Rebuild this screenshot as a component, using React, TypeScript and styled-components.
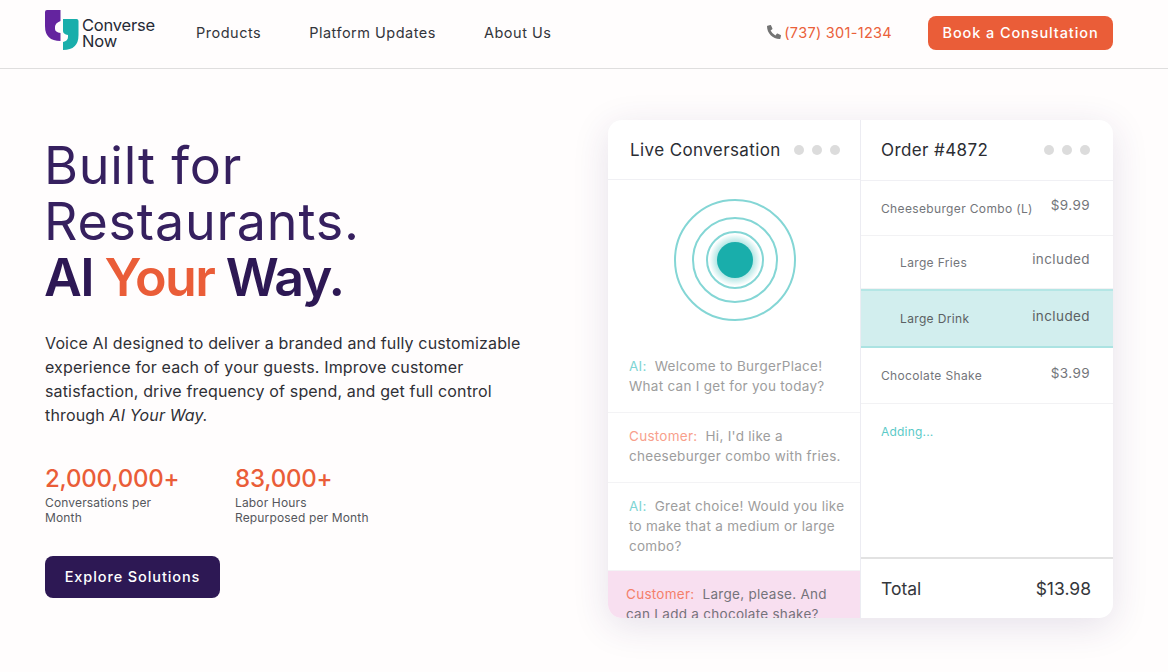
import { Fragment } from 'react';
import styled, { createGlobalStyle } from 'styled-components';
import { FaPhoneAlt } from 'react-icons/fa';

const GlobalStyle = createGlobalStyle`
  html, body {
    margin: 0;
    background: #fffdfd;
    font-family: 'Inter', 'Liberation Sans', sans-serif;
    color: #2a2c33;
  }
  * {
    box-sizing: border-box;
  }
`;

const Page = styled.div`
  width: 1168px;
  height: 672px;
  overflow: hidden;
`;

const Header = styled.header`
  display: flex;
  align-items: center;
  height: 69px;
  padding: 0 55px 2px 45px;
  border-bottom: 1px solid #dfdede;
`;

const Brand = styled.a`
  display: flex;
  align-items: flex-start;
  width: 151px;
  height: 42px;
  margin-top: -6px;
`;

const BrandName = styled.span`
  margin: 8px 0 0 3px;
  font-size: 16.5px;
  line-height: 16px;
  letter-spacing: -0.2px;
  color: #262a36;
`;

const Nav = styled.nav`
  display: flex;
  gap: 48px;
  flex: 1;
  margin-bottom: 2px;
`;

const NavItem = styled.a`
  font-size: 14.5px;
  letter-spacing: 0.5px;
  color: #33353b;
`;

const Phone = styled.a`
  display: flex;
  align-items: center;
  gap: 3px;
  margin: 0 36px 2px 0;
  font-size: 14.5px;
  letter-spacing: 0.3px;
  color: #ea6039;
  svg {
    color: #737373;
  }
`;

const Cta = styled.a`
  display: flex;
  align-items: center;
  justify-content: center;
  width: 185px;
  height: 34px;
  padding-bottom: 1px;
  border-radius: 8px;
  background: #ea5d38;
  color: #fff;
  font-size: 14.5px;
  font-weight: 500;
  letter-spacing: 0.9px;
`;

const Main = styled.main`
  display: flex;
  justify-content: space-between;
  padding: 0 55px 0 45px;
`;

const Intro = styled.section`
  display: flex;
  flex-direction: column;
  align-items: flex-start;
  width: 500px;
  padding-top: 69px;
`;

const Title = styled.h1`
  margin: 0 0 0 -1px;
  font-size: 52px;
  font-weight: 400;
  line-height: 56px;
  letter-spacing: 0.8px;
  color: #36205f;
`;

const Strong = styled.span`
  font-weight: 600;
  letter-spacing: -1.6px;
  color: #2d1854;
`;

const Accent = styled.span`
  color: #ea5d38;
`;

const Lead = styled.p`
  margin: 25px 0 0;
  font-size: 16px;
  line-height: 24px;
  letter-spacing: 0.15px;
  white-space: nowrap;
  color: #2f3036;
`;

const Stats = styled.div`
  display: flex;
  margin-top: 36px;
`;

const Stat = styled.div<{ $width: number }>`
  width: ${p => p.$width}px;
`;

const StatValue = styled.div`
  font-size: 24px;
  font-weight: 500;
  line-height: 32px;
  letter-spacing: -0.2px;
  color: #ea5d38;
`;

const StatLabel = styled.div`
  font-size: 12px;
  line-height: 15px;
  letter-spacing: 0.15px;
  color: #55575c;
`;

const Explore = styled.a`
  display: flex;
  align-items: center;
  justify-content: center;
  width: 175px;
  height: 42px;
  margin-top: 31px;
  padding-bottom: 1px;
  border-radius: 8px;
  background: #2d1854;
  color: #fff;
  font-size: 14.5px;
  font-weight: 500;
  letter-spacing: 0.9px;
`;

const Card = styled.section`
  display: flex;
  width: 505px;
  height: 498px;
  margin-top: 51px;
  overflow: hidden;
  border-radius: 14px;
  background: #fff;
  box-shadow: 0 8px 36px rgba(60, 40, 110, 0.13);
`;

const Panel = styled.div<{ $divided?: boolean }>`
  display: flex;
  flex-direction: column;
  width: ${p => (p.$divided ? 253 : 252)}px;
  border-right: ${p => (p.$divided ? '1px solid #ececf2' : 'none')};
`;

const PanelHead = styled.div<{ $order?: boolean }>`
  display: flex;
  align-items: center;
  justify-content: space-between;
  flex: none;
  height: ${p => (p.$order ? 61 : 60)}px;
  padding: ${p => (p.$order ? '0 23px 0 20px' : '0 20px 0 22px')};
  border-bottom: 1px solid #f0f0f4;
`;

const PanelTitle = styled.h2`
  margin: 0;
  font-size: 17px;
  font-weight: 400;
  letter-spacing: 0.4px;
  color: #2b2d33;
`;

const Dots = styled.div`
  display: flex;
  gap: 8px;
`;

const Dot = styled.span`
  width: 10px;
  height: 10px;
  border-radius: 50%;
  background: #dcdcdc;
`;

const Pulse = styled.div`
  display: flex;
  justify-content: center;
  flex: none;
  height: 163px;
  padding: 19px 0 0 2px;
`;

const Ring = styled.div<{ $size: number; $glow?: boolean }>`
  display: flex;
  align-items: center;
  justify-content: center;
  width: ${p => p.$size}px;
  height: ${p => p.$size}px;
  border-radius: 50%;
  border: 2px solid #84d6d5;
  background: ${p =>
    p.$glow ? 'radial-gradient(circle closest-side, #a9e3e1 62%, #fff 96%)' : 'transparent'};
`;

const Core = styled.div`
  width: 36px;
  height: 36px;
  border-radius: 50%;
  background: #19aeab;
`;

const Messages = styled.div`
  flex: 1;
  min-height: 0;
  overflow: hidden;
`;

const Message = styled.div<{ $active?: boolean; $height: number }>`
  height: ${p => p.$height}px;
  padding: ${p => (p.$active ? '13px 12px 0 18px' : '13px 12px 0 21px')};
  font-size: 13.5px;
  line-height: 20px;
  letter-spacing: 0.28px;
  color: ${p => (p.$active ? '#74737a' : '#9d9d9d')};
  background: ${p => (p.$active ? '#f8dff0' : 'transparent')};
  border-bottom: ${p => (p.$active ? 'none' : '1px solid #f3f3f5')};
`;

const Speaker = styled.span<{ $who: 'ai' | 'customer'; $active?: boolean }>`
  margin-right: 8px;
  color: ${p => (p.$who === 'ai' ? '#7fd5d4' : p.$active ? '#f4806a' : '#f8a08c')};
`;

const Rows = styled.div`
  flex: 1;
`;

const OrderRow = styled.div<{ $sub?: boolean; $active?: boolean; $height: number }>`
  display: flex;
  align-items: center;
  justify-content: space-between;
  height: ${p => p.$height}px;
  padding: 0 23px 0 ${p => (p.$sub ? 39 : 20)}px;
  background: ${p => (p.$active ? '#d2eeee' : 'transparent')};
  border-bottom: ${p => (p.$active ? '2px solid #abe3e2' : '1px solid #f2f2f4')};
  border-top: ${p => (p.$active ? '2px solid #b4e6e5' : 'none')};
  color: ${p => (p.$active ? '#5b6163' : '#73757a')};
`;

const ItemName = styled.span`
  font-size: 12px;
  letter-spacing: 0.35px;
`;

const ItemPrice = styled.span`
  margin-bottom: 6px;
  font-size: 13.5px;
  letter-spacing: 0.4px;
`;

const Adding = styled.div`
  padding: 20px 20px 0;
  font-size: 12px;
  letter-spacing: 0.2px;
  color: #5bcac8;
`;

const Total = styled.div`
  display: flex;
  align-items: center;
  justify-content: space-between;
  flex: none;
  height: 61px;
  padding: 0 22px 0 20px;
  border-top: 2px solid #e2e2e2;
  font-size: 17.5px;
  color: #35373c;
`;

const messages = [
  { who: 'ai', label: 'AI:', text: 'Welcome to BurgerPlace! What can I get for you today?', height: 70 },
  { who: 'customer', label: 'Customer:', text: "Hi, I'd like a cheeseburger combo with fries.", height: 70 },
  { who: 'ai', label: 'AI:', text: 'Great choice! Would you like to make that a medium or large combo?', height: 88 },
  { who: 'customer', label: 'Customer:', text: 'Large, please. And can I add a chocolate shake?', height: 60, active: true },
] as const;

const items = [
  { name: 'Cheeseburger Combo (L)', price: '$9.99', height: 55 },
  { name: 'Large Fries', price: 'included', height: 53, sub: true },
  { name: 'Large Drink', price: 'included', height: 59, sub: true, active: true },
  { name: 'Chocolate Shake', price: '$3.99', height: 56 },
];

function WindowDots() {
  return (
    <Dots>
      <Dot />
      <Dot />
      <Dot />
    </Dots>
  );
}

export default function App() {
  return (
    <Fragment>
      <GlobalStyle />
      <Page>
        <Header>
          <Brand>
            <svg width="34" height="42" viewBox="45 9 34 42" style={{ flex: 'none' }}>
              <path d="M45 12 Q45 10 47 10 H60.5 V21 Q55 23 55 27 V29 Q55 32 60.5 33 V41 Q45 41 45 26 Z" fill="#64249f" />
              <path d="M63 19 H76.5 Q78.5 19 78.5 21 V35 Q78.5 50 63 50 V42 Q68 41 68 37 V35 Q63 34 63 31 Z" fill="#19aeab" />
            </svg>
            <BrandName>
              Converse
              <br />
              Now
            </BrandName>
          </Brand>
          <Nav>
            <NavItem>Products</NavItem>
            <NavItem>Platform Updates</NavItem>
            <NavItem>About Us</NavItem>
          </Nav>
          <Phone>
            <FaPhoneAlt size={14} />
            (737) 301-1234
          </Phone>
          <Cta>Book a Consultation</Cta>
        </Header>
        <Main>
          <Intro>
            <Title>
              Built for
              <br />
              Restaurants.
              <br />
              <Strong>
                AI <Accent>Your</Accent> Way.
              </Strong>
            </Title>
            <Lead>
              Voice AI designed to deliver a branded and fully customizable
              <br />
              experience for each of your guests. Improve customer
              <br />
              satisfaction, drive frequency of spend, and get full control
              <br />
              through <em>AI Your Way.</em>
            </Lead>
            <Stats>
              <Stat $width={190}>
                <StatValue>2,000,000+</StatValue>
                <StatLabel>
                  Conversations per
                  <br />
                  Month
                </StatLabel>
              </Stat>
              <Stat $width={170}>
                <StatValue>83,000+</StatValue>
                <StatLabel>
                  Labor Hours
                  <br />
                  Repurposed per Month
                </StatLabel>
              </Stat>
            </Stats>
            <Explore>Explore Solutions</Explore>
          </Intro>
          <Card>
            <Panel $divided>
              <PanelHead>
                <PanelTitle>Live Conversation</PanelTitle>
                <WindowDots />
              </PanelHead>
              <Pulse>
                <Ring $size={122}>
                  <Ring $size={86}>
                    <Ring $size={58} $glow>
                      <Core />
                    </Ring>
                  </Ring>
                </Ring>
              </Pulse>
              <Messages>
                {messages.map(m => {
                  const active = 'active' in m && m.active;
                  return (
                    <Message key={m.text} $active={active} $height={m.height}>
                      <Speaker $who={m.who} $active={active}>
                        {m.label}
                      </Speaker>
                      {m.text}
                    </Message>
                  );
                })}
              </Messages>
            </Panel>
            <Panel>
              <PanelHead $order>
                <PanelTitle>Order #4872</PanelTitle>
                <WindowDots />
              </PanelHead>
              <Rows>
                {items.map(item => (
                  <OrderRow key={item.name} $sub={item.sub} $active={item.active} $height={item.height}>
                    <ItemName>{item.name}</ItemName>
                    <ItemPrice>{item.price}</ItemPrice>
                  </OrderRow>
                ))}
                <Adding>Adding...</Adding>
              </Rows>
              <Total>
                <span>Total</span>
                <span>$13.98</span>
              </Total>
            </Panel>
          </Card>
        </Main>
      </Page>
    </Fragment>
  );
}
